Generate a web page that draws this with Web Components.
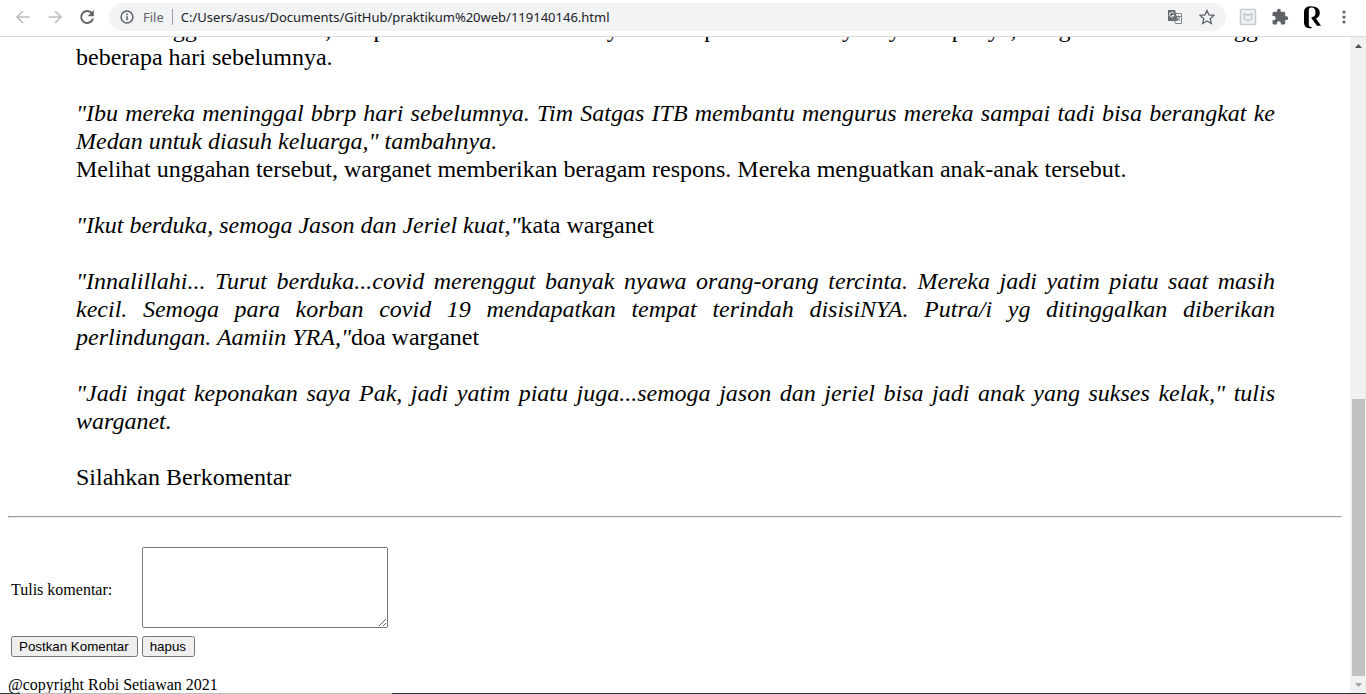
<!DOCTYPE html>
<html lang="id">
<head>
<meta charset="utf-8">
<title>119140146.html</title>
<style>
body { margin: 0; background: #fff; font-family: "Liberation Serif", "Times New Roman", serif; color: #000; }
</style>
</head>
<body>
<browser-window>
  <browser-toolbar slot="toolbar"></browser-toolbar>
  <news-article>
    <p>tua meninggal dunia dulu, tetapi mereka harus keduanya itu tetap menemani ayahnya itu punya, dengan ibunda meninggal beberapa hari sebelumnya.<br><br>
    <i>"Ibu mereka meninggal bbrp hari sebelumnya. Tim Satgas ITB membantu mengurus mereka sampai tadi bisa berangkat ke Medan untuk diasuh keluarga," tambahnya.</i><br>
    Melihat unggahan tersebut, warganet memberikan beragam respons. Mereka menguatkan anak-anak tersebut.<br><br>
    <i>"Ikut berduka, semoga Jason dan Jeriel kuat,"</i>kata warganet<br><br>
    <i>"Innalillahi... Turut berduka...covid merenggut banyak nyawa orang-orang tercinta. Mereka jadi yatim piatu saat masih kecil. Semoga para korban covid 19 mendapatkan tempat terindah disisiNYA. Putra/i yg ditinggalkan diberikan perlindungan. Aamiin YRA,"</i>doa warganet<br><br>
    <i>"Jadi ingat keponakan saya Pak, jadi yatim piatu juga...semoga jason dan jeriel bisa jadi anak yang sukses kelak," tulis warganet.</i><br><br>
    Silahkan Berkomentar</p>
  </news-article>
  <comment-form></comment-form>
  <page-footer>@copyright Robi Setiawan 2021</page-footer>
</browser-window>

<template id="window-template">
  <style>
    :host { display: flex; flex-direction: column; height: 100vh; overflow: hidden; }
    .view { flex: 1; min-height: 0; display: flex; }
    .page { flex: 1; min-width: 0; overflow: hidden; padding: 0 8px; }
    .edge { flex: none; height: 1px; background: linear-gradient(to right, #24413c 20px, #bdbdbd 20px 392px, #27323c 392px); }
  </style>
  <slot name="toolbar"></slot>
  <div class="view">
    <div class="page"><slot></slot></div>
    <scroll-track></scroll-track>
  </div>
  <div class="edge"></div>
</template>

<template id="toolbar-template">
  <style>
    :host { display: flex; align-items: center; flex: none; height: 34px; padding: 0 12px 2px 13px; border-bottom: 1px solid #dadce0; background: #fff; font: 13px/20px "Noto Sans", "Open Sans", sans-serif; color: #202124; }
    button { display: flex; align-items: center; justify-content: center; flex: none; width: 20px; height: 28px; padding: 0; border: 0; background: none; }
    svg { display: block; }
    .nav, .inner, .tools { display: flex; gap: 12px; }
    .address { flex: 1; min-width: 0; display: flex; align-items: center; height: 28px; margin: 0 12px; padding: 0 9px 0 8px; border-radius: 14px; background: #f1f3f4; }
    .kind { margin-left: 6px; padding-right: 8px; border-right: 1px solid #9aa0a6; line-height: 16px; color: #5f6368; }
    input { flex: 1; min-width: 0; height: 24px; margin-left: 8px; padding: 0; border: 0; outline: 0; background: none; font: inherit; color: inherit; }
  </style>
  <div class="nav">
    <button aria-label="Kembali"><svg width="16" height="16" viewBox="0 0 16 16" fill="none" stroke="#bcbec1" stroke-width="1.7"><path d="M14.5 8H2.5M8 2L2 8l6 6"/></svg></button>
    <button aria-label="Maju"><svg width="16" height="16" viewBox="0 0 16 16" fill="none" stroke="#bcbec1" stroke-width="1.7"><path d="M1.5 8h12M8 2l6 6-6 6"/></svg></button>
    <button aria-label="Muat ulang"><svg width="16" height="16" viewBox="0 0 16 16"><path d="M13 4.4A6 6 0 1 0 14 9.5" fill="none" stroke="#5f6368" stroke-width="1.9"/><path d="M14.8 1v6.200H8.600z" fill="#5f6368"/></svg></button>
  </div>
  <div class="address">
    <button aria-label="Info situs"><svg width="14" height="14" viewBox="0 0 14 14"><circle cx="7" cy="7" r="5.9" fill="none" stroke="#5f6368" stroke-width="1.5"/><path d="M6.200 6.200h1.600v4H6.200zM6.200 3.600h1.600v1.600H6.200z" fill="#5f6368"/></svg></button>
    <span class="kind">File</span>
    <input aria-label="Alamat" value="C:/Users/asus/Documents/GitHub/praktikum%20web/119140146.html">
    <div class="inner">
      <button aria-label="Terjemahkan"><svg width="16" height="16" viewBox="0 0 16 16"><path d="M7 4.500h7.500v10H8.500L7 11z" fill="#fff" stroke="#80868b"/><path d="M1 1h7l3 11H1z" fill="#6b6f74"/><path d="M6.900 4.600A2.300 2.300 0 1 0 7 6.500H5" fill="none" stroke="#fff"/><path d="M9.500 7.500h4M11.500 6.500v1M13 7.500c-.5 2-1.500 3-2.500 3.500M10.500 8.500l2.500 3.500" fill="none" stroke="#6b6f74"/></svg></button>
      <button aria-label="Bookmark"><svg width="16" height="16" viewBox="0 0 16 16"><path d="M8 1.400l2 4.500 4.900.5-3.700 3.300 1.100 4.800L8 12l-4.300 2.500 1.100-4.800L1.100 6.400 6 5.900z" fill="none" stroke="#5f6368" stroke-width="1.300"/></svg></button>
    </div>
  </div>
  <div class="tools">
    <button aria-label="Keamanan"><svg width="18" height="18" viewBox="0 0 18 18"><rect x="1.500" y="1.500" width="15" height="15" rx="1" fill="#f1f3f4" stroke="#c6cbcf" stroke-width="1.600"/><path d="M5.300 5.500L9 7.300l3.700-1.800v5.300L9 12.800l-3.700-2z" fill="none" stroke="#c6cbcf" stroke-width="1.600"/></svg></button>
    <button aria-label="Ekstensi"><svg width="18" height="18" viewBox="0 0 24 24" fill="#5f6368"><path d="M20.500 11H19V7c0-1.100-.9-2-2-2h-4V3.500a2.500 2.500 0 0 0-5 0V5H4c-1.100 0-2 .9-2 2v3.800h1.500a2.700 2.700 0 0 1 0 5.400H2V20c0 1.100.9 2 2 2h3.800v-1.500a2.700 2.700 0 0 1 5.400 0V22H17c1.100 0 2-.9 2-2v-4h1.500a2.500 2.500 0 0 0 0-5z"/></svg></button>
    <button aria-label="Profil"><svg width="20" height="24" viewBox="0 0 20 24"><path d="M2 7Q2 1.200 9 1.200 17.800 1.200 17.800 7.800 17.800 12 14 13.500L19 20.800H15L9.500 13.200V12.200Q13.500 12 13.500 7.500 13.500 2.500 9.500 2.500 6.800 2.700 6.800 5V19.500Q6.900 22.200 10 22.200L9.500 23.200Q2 23.500 2 18z"/></svg></button>
    <button aria-label="Menu"><svg width="4" height="14" viewBox="0 0 4 14" fill="#5f6368"><circle cx="2" cy="2" r="1.600"/><circle cx="2" cy="7" r="1.600"/><circle cx="2" cy="12" r="1.600"/></svg></button>
  </div>
</template>

<template id="scroll-template">
  <style>
    :host { display: flex; flex-direction: column; flex: none; width: 16px; background: #f1f1f1; }
    svg { display: block; flex: none; }
    .track { flex: 1; display: flex; flex-direction: column; justify-content: flex-end; align-items: flex-end; }
    .thumb { width: 13px; height: 44.5%; margin-right: 1px; background: #c1c1c1; }
  </style>
  <svg width="16" height="17" viewBox="0 0 16 17"><path d="M5 11h7L8.500 7z" fill="#505050"/></svg>
  <div class="track"><div class="thumb"></div></div>
  <svg width="16" height="17" viewBox="0 0 16 17"><path d="M5 7h7l-3.500 4z" fill="#a3a3a3"/></svg>
</template>

<template id="article-template">
  <style>
    :host { display: block; margin: -22px 67px 25px 68px; font-size: 24px; line-height: 28px; text-align: justify; }
    ::slotted(p) { margin: 0; }
  </style>
  <slot></slot>
</template>

<template id="form-template">
  <style>
    :host { display: block; font-size: 16px; line-height: 18px; }
    hr { margin: 0 0 26px; }
    textarea { width: 240px; resize: both; }
    button { height: 21px; padding: 1px 7px 1px 6px; font-family: "Liberation Sans", Arial, sans-serif; }
  </style>
  <hr>
  <form onsubmit="return false">
    <table role="presentation">
      <tr><td><label for="comment">Tulis komentar:</label></td><td><textarea id="comment" rows="5" cols="30"></textarea></td></tr>
      <tr><td><button type="submit">Postkan Komentar</button></td><td><button type="reset">hapus</button></td></tr>
    </table>
  </form>
</template>

<template id="footer-template">
  <style>:host { display: block; margin-top: 16px; font-size: 16px; line-height: 18px; }</style>
  <slot></slot>
</template>

<script>
const define = (name, id) => customElements.define(name, class extends HTMLElement {
  constructor() {
    super();
    this.attachShadow({ mode: "open" }).append(document.getElementById(id).content.cloneNode(true));
  }
});
define("scroll-track", "scroll-template");
define("browser-window", "window-template");
define("browser-toolbar", "toolbar-template");
define("news-article", "article-template");
define("comment-form", "form-template");
define("page-footer", "footer-template");
</script>
</body>
</html>
